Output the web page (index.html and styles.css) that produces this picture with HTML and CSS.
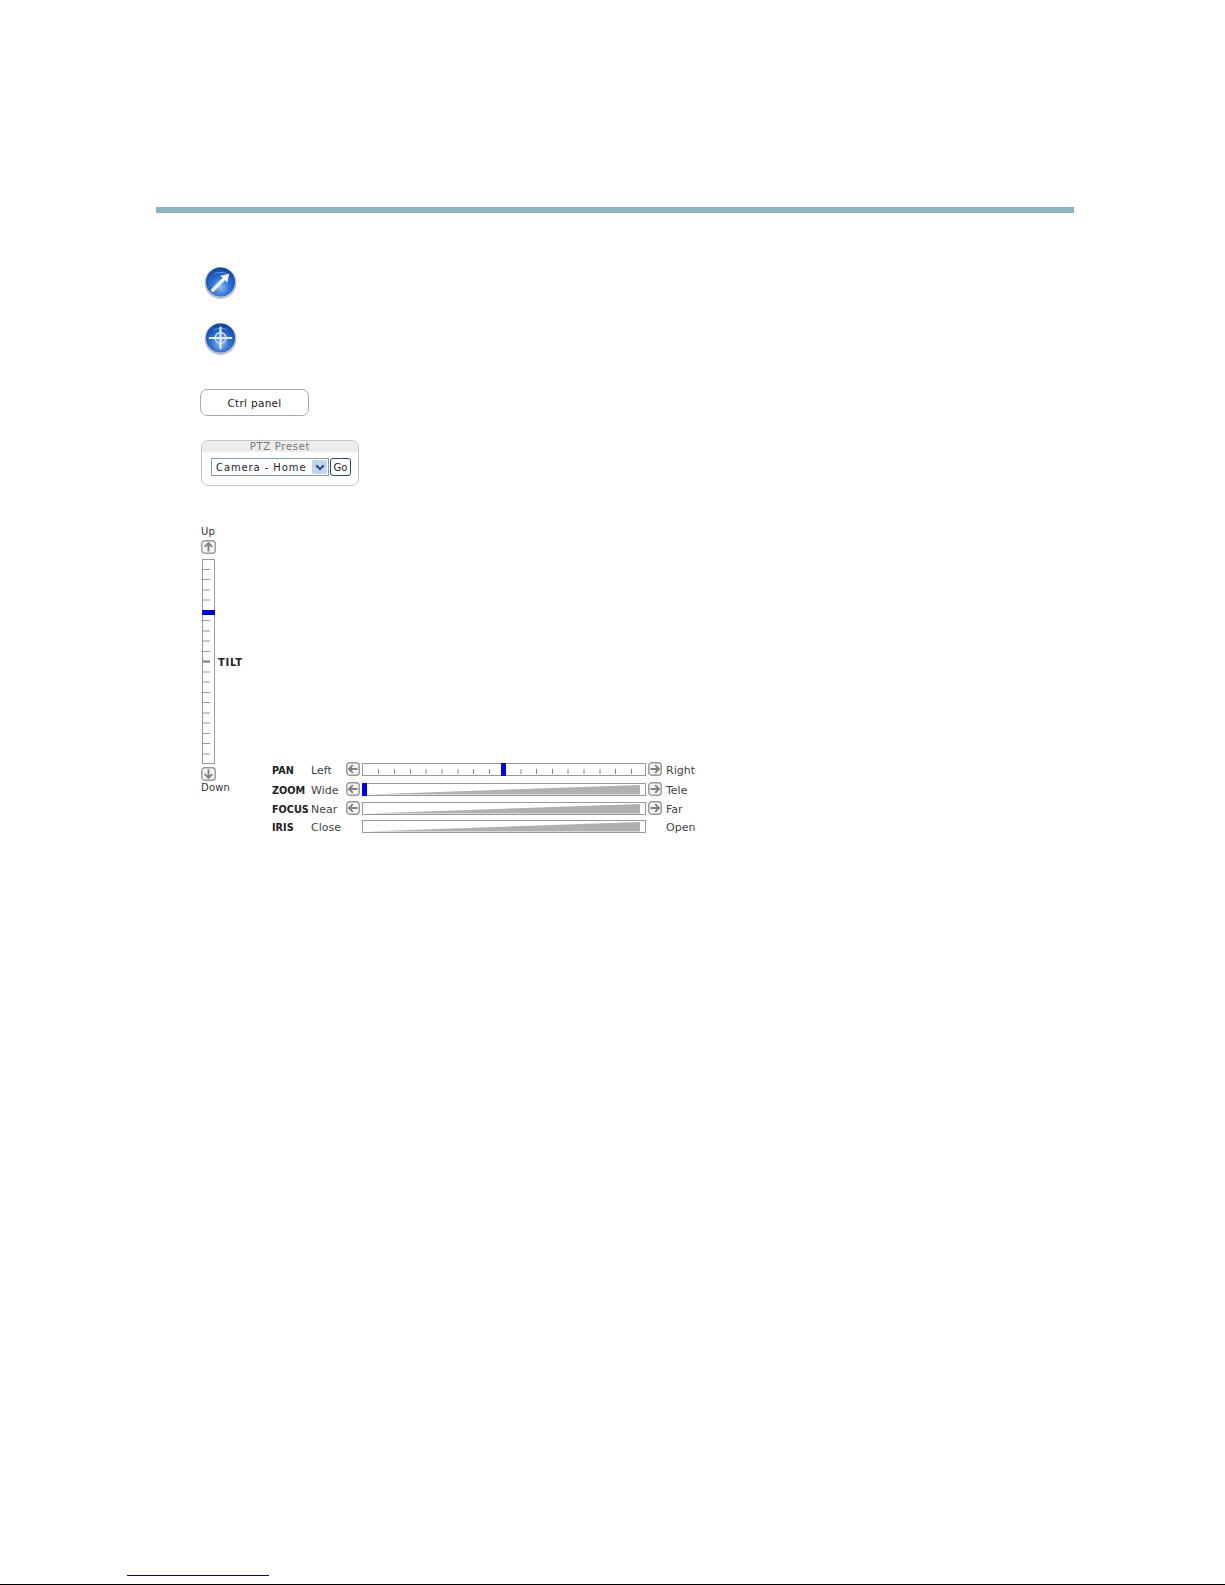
FILE: index.html
```html
<!DOCTYPE html>
<html lang="en">
<head>
<meta charset="utf-8">
<title>PTZ controls</title>
<link rel="stylesheet" href="styles.css">
</head>
<body>
<div class="page">
  <div class="rule"></div>
  <main class="content">
    <svg class="orb orb-first" viewBox="0 0 34 34" aria-hidden="true">
      <defs>
        <radialGradient id="orbFill" cx="50%" cy="68%" r="62%">
          <stop offset="0" stop-color="#8fbcf4"/>
          <stop offset="0.5" stop-color="#2f74dc"/>
          <stop offset="1" stop-color="#114aa6"/>
        </radialGradient>
      </defs>
      <circle cx="17" cy="17.5" r="16.5" fill="#c4c4c4"/>
      <circle cx="17" cy="16.5" r="15" fill="url(#orbFill)"/>
      <path d="M8 8.5a13 8 0 0 1 18 0a20 12 0 0 0-18 0z" fill="#9cc2f2" opacity=".6"/>
      <path d="M9 25 20 14" stroke="#eef5ff" stroke-width="3.6" stroke-linecap="round" fill="none"/>
      <path d="M26 8 24 17 17 10z" fill="#f4f8ff"/>
    </svg>
    <svg class="orb orb-second" viewBox="0 0 34 34" aria-hidden="true">
      <circle cx="17" cy="17.5" r="16.5" fill="#c4c4c4"/>
      <circle cx="17" cy="16.5" r="15" fill="url(#orbFill)"/>
      <path d="M8 8.5a13 8 0 0 1 18 0a20 12 0 0 0-18 0z" fill="#9cc2f2" opacity=".6"/>
      <circle cx="17" cy="16.5" r="5.5" fill="none" stroke="#bcd4f6" stroke-width="1.8"/>
      <path d="M17 5v23M5 16.5h24" stroke="#e6f0ff" stroke-width="2.2"/>
    </svg>

    <div class="ctrl-btn">Ctrl panel</div>

    <section class="preset">
      <div class="preset-title">PTZ Preset</div>
      <div class="preset-body">
        <div class="select">
          <span class="select-text">Camera - Home</span>
          <span class="select-arrow">
            <svg width="10" height="7" viewBox="0 0 10 7" aria-hidden="true"><path d="M1.2 1.2 5 5l3.8-3.8" fill="none" stroke="#2c4f86" stroke-width="2"/></svg>
          </span>
        </div>
        <div class="go">Go</div>
      </div>
    </section>

    <section class="ptz">
      <div class="tilt">
        <div class="tilt-end">Up</div>
        <svg class="arrow-btn arrow-up" viewBox="0 0 15 14" aria-hidden="true"><rect x=".75" y=".75" width="13.5" height="12.5" rx="3"/><path d="M7.5 11.5V3M3.7 6.8 7.5 3l3.8 3.8"/></svg>
        <div class="tilt-mid">
          <div class="tilt-track">
            <svg class="tilt-ticks" width="11" height="203" viewBox="0 0 11 203" aria-hidden="true">
              <path d="M0 9.5h7M0 19.5h7M0 30h7M0 40h7M0 50.5h7M0 60.5h7M0 71h7M0 81h7M0 91.5h7M0 112h7M0 122h7M0 132.5h7M0 142.5h7M0 153h7M0 163h7M0 173.5h7M0 183.5h7M0 194h7" stroke="#999" stroke-width="1"/>
              <path d="M0 101.5h7" stroke="#777" stroke-width="2"/>
            </svg>
            <span class="tilt-thumb"></span>
          </div>
          <b class="tilt-label">TILT</b>
        </div>
        <svg class="arrow-btn arrow-down" viewBox="0 0 15 14" aria-hidden="true"><rect x=".75" y=".75" width="13.5" height="12.5" rx="3"/><path d="M7.5 2.5V11M3.7 7.2 7.5 11l3.8-3.8"/></svg>
        <div class="tilt-end">Down</div>
      </div>

      <div class="rows">
        <b class="axis">PAN</b><span class="end">Left</span>
        <svg class="arrow-btn" viewBox="0 0 14 14" aria-hidden="true"><rect x=".75" y=".75" width="12.5" height="12.5" rx="3"/><path d="M11.5 7H3M6.8 3.2 3 7l3.8 3.8"/></svg>
        <div class="track">
          <svg class="pan-ticks" width="282" height="11" viewBox="0 0 282 11" aria-hidden="true">
            <path d="M15.5 5v5M31.5 5v5M47.5 5v5M63 5v5M79 5v5M95 5v5M110.5 5v5M126.5 5v5M158 5v5M173.5 5v5M189.5 5v5M205 5v5M221 5v5M237 5v5M252.5 5v5M268.5 5v5" stroke="#888"/>
          </svg>
          <span class="thumb thumb-pan"></span>
        </div>
        <svg class="arrow-btn" viewBox="0 0 14 14" aria-hidden="true"><rect x=".75" y=".75" width="12.5" height="12.5" rx="3"/><path d="M2.5 7H11M7.2 3.2 11 7l-3.8 3.8"/></svg>
        <span class="end">Right</span>

        <b class="axis">ZOOM</b><span class="end">Wide</span>
        <svg class="arrow-btn" viewBox="0 0 14 14" aria-hidden="true"><rect x=".75" y=".75" width="12.5" height="12.5" rx="3"/><path d="M11.5 7H3M6.8 3.2 3 7l3.8 3.8"/></svg>
        <div class="track">
          <svg class="wedge" viewBox="0 0 282 11" preserveAspectRatio="none" aria-hidden="true"><path d="M4 10.5 277 1v9.5z"/></svg>
          <span class="thumb thumb-zoom"></span>
        </div>
        <svg class="arrow-btn" viewBox="0 0 14 14" aria-hidden="true"><rect x=".75" y=".75" width="12.5" height="12.5" rx="3"/><path d="M2.5 7H11M7.2 3.2 11 7l-3.8 3.8"/></svg>
        <span class="end">Tele</span>

        <b class="axis">FOCUS</b><span class="end">Near</span>
        <svg class="arrow-btn" viewBox="0 0 14 14" aria-hidden="true"><rect x=".75" y=".75" width="12.5" height="12.5" rx="3"/><path d="M11.5 7H3M6.8 3.2 3 7l3.8 3.8"/></svg>
        <div class="track">
          <svg class="wedge" viewBox="0 0 282 11" preserveAspectRatio="none" aria-hidden="true"><path d="M4 10.5 277 1v9.5z"/></svg>
        </div>
        <svg class="arrow-btn" viewBox="0 0 14 14" aria-hidden="true"><rect x=".75" y=".75" width="12.5" height="12.5" rx="3"/><path d="M2.5 7H11M7.2 3.2 11 7l-3.8 3.8"/></svg>
        <span class="end">Far</span>

        <b class="axis">IRIS</b><span class="end">Close</span>
        <span class="no-btn"></span>
        <div class="track">
          <svg class="wedge" viewBox="0 0 282 11" preserveAspectRatio="none" aria-hidden="true"><path d="M4 10.5 277 1v9.5z"/></svg>
        </div>
        <span class="no-btn"></span>
        <span class="end">Open</span>
      </div>
    </section>
  </main>
  <footer class="footer">
    <div class="footer-link"></div>
    <div class="footer-line"></div>
  </footer>
</div>
</body>
</html>
```
FILE: styles.css
```css
* { box-sizing: border-box; }
html, body { margin: 0; padding: 0; background: #fff; }
body {
  font-family: "DejaVu Sans", Verdana, sans-serif;
  font-size: 10.5px;
  color: #333;
}
.page {
  height: 1585px;
  overflow: hidden;
  display: flex;
  flex-direction: column;
  padding-top: 207px;
}
.rule {
  height: 6px;
  margin: 0 151px 0 156px;
  background: #8db3c3;
  flex: none;
}
.content {
  flex: 1;
  padding: 53px 0 0 201px;
  display: flex;
  flex-direction: column;
  align-items: flex-start;
}
.orb { width: 33px; height: 33px; display: block; margin-left: 3px; filter: blur(0.5px); }
.orb-second { margin-top: 23px; }

.ctrl-btn {
  margin: 34px 0 0 -1px;
  width: 109px;
  height: 27px;
  border: 1px solid #a9a9a9;
  border-radius: 7px;
  display: flex;
  align-items: center;
  justify-content: center;
  color: #222;
  font-size: 10.5px;
  letter-spacing: .3px;
}

.preset {
  margin-top: 24px;
  width: 158px;
  height: 46px;
  border: 1px solid #c4c4c4;
  border-radius: 7px;
  overflow: hidden;
}
.preset-title {
  height: 11px;
  background: #ececec;
  color: #777;
  font-size: 10px;
  line-height: 11px;
  text-align: center;
  letter-spacing: .7px;
}
.preset-body {
  display: flex;
  gap: 1px;
  padding: 6px 0 0 9px;
}
.select {
  width: 118px;
  height: 18px;
  border: 1px solid #7f9db9;
  display: flex;
  align-items: center;
  justify-content: space-between;
  padding: 1px 1px 1px 4px;
  color: #222;
  font-size: 10px;
  letter-spacing: .9px;
  white-space: nowrap;
}
.select-arrow {
  width: 15px;
  height: 14px;
  background: #c3d3f2;
  border-radius: 2px;
  display: flex;
  align-items: center;
  justify-content: center;
}
.go {
  width: 21px;
  height: 18px;
  border: 1px solid #1f4e79;
  border-radius: 3px;
  display: flex;
  align-items: center;
  justify-content: center;
  font-size: 10px;
  color: #222;
}

.ptz {
  margin-top: 39px;
  display: flex;
  align-items: flex-end;
}
.tilt {
  width: 71px;
  display: flex;
  flex-direction: column;
  align-items: flex-start;
  margin-bottom: 38px;
}
.tilt-end { font-size: 10px; line-height: 14px; color: #333; letter-spacing: .2px; }
.arrow-btn {
  display: block;
  width: 14px;
  height: 14px;
  flex: none;
}
.rows .arrow-btn { margin-top: -1px; }
.tilt > .arrow-btn { width: 15px; height: 14px; }
.arrow-up { margin-top: 1px; }
.arrow-down { margin-top: 3px; }
.arrow-btn rect { fill: #f4f4f4; stroke: #999; stroke-width: 1.4; }
.arrow-btn path { fill: none; stroke: #808080; stroke-width: 1.9; }
.tilt-mid {
  display: flex;
  align-items: flex-start;
  margin-top: 5px;
}
.tilt-track {
  position: relative;
  margin-left: 1px;
  width: 13px;
  height: 205px;
  border: 1px solid #999;
}
.tilt-ticks { display: block; }
.tilt-thumb {
  position: absolute;
  left: -1px;
  right: -1px;
  top: 50px;
  height: 5px;
  background: #0000f0;
}
.tilt-label {
  margin: 97px 0 0 3px;
  font-size: 10px;
  line-height: 13px;
  color: #222;
  letter-spacing: .7px;
}

.rows {
  display: grid;
  grid-template-columns: 39px 35px 16px 286px 18px auto;
  grid-template-rows: 14px 13px 12px 13px;
  row-gap: 6px;
  align-items: start;
}
.axis { font-size: 9.7px; color: #222; line-height: 13px; padding-top: 1px; }
.end { font-size: 11px; line-height: 13px; color: #444; white-space: nowrap; padding-top: 1px; }
.no-btn { display: block; }
.track {
  position: relative;
  height: 13px;
  border: 1px solid #999;
  width: 284px;
}
.pan-ticks { display: block; }
.wedge {
  display: block;
  width: 100%;
  height: 100%;
}
.wedge path { fill: #b0b0b0; }
.thumb {
  position: absolute;
  top: -1px;
  bottom: -1px;
  width: 5px;
  background: #0000f0;
}
.thumb-pan { left: 138px; }
.thumb-zoom { left: -1px; }

.footer { flex: none; }
.footer-link {
  width: 142px;
  height: 1px;
  margin-left: 127px;
  background: #0000c8;
}
.footer-line {
  margin-top: 8px;
  height: 1px;
  background: #000;
}
```
